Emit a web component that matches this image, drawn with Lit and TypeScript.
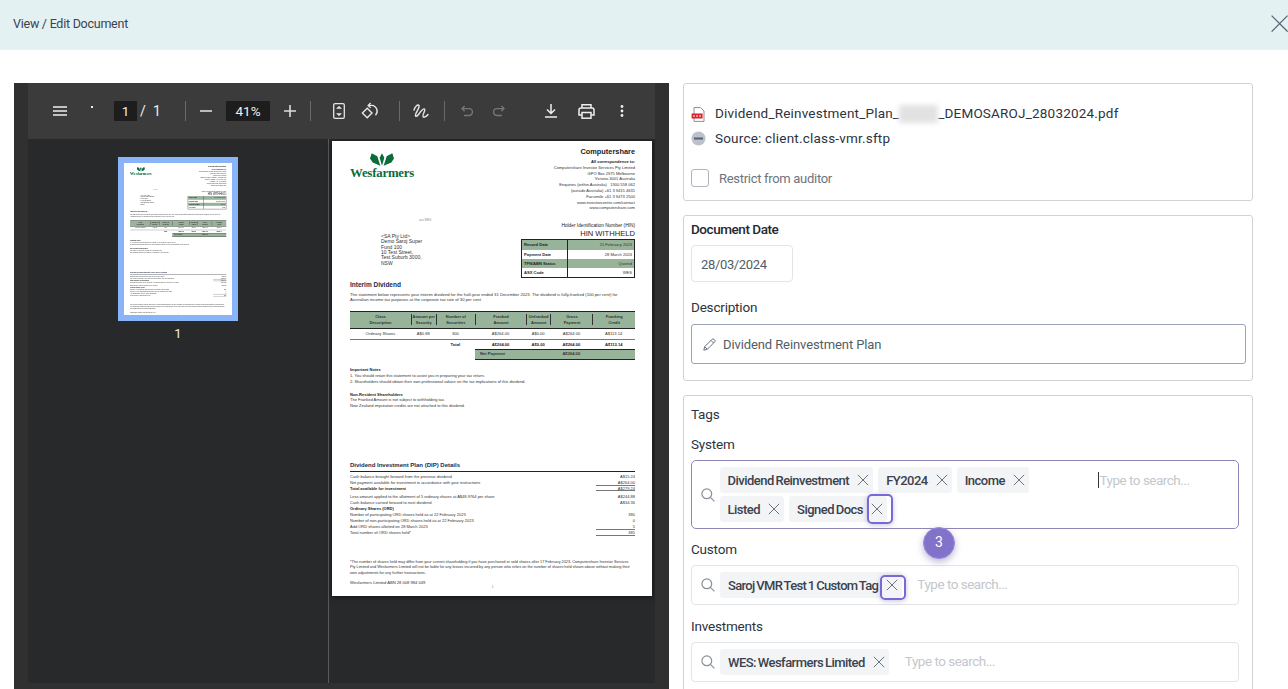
import { LitElement, css, html } from 'lit';
import { customElement, property } from 'lit/decorators.js';

const closeIcon = (size = 12) => html`<svg class="x" width=${size} height=${size} viewBox="0 0 12 12" fill="none" stroke="currentColor" stroke-width="1"><path d="M.8.8l10.4 10.4M11.2.8L.8 11.2" /></svg>`;

const searchIcon = html`<svg class="search" width="14" height="14" viewBox="0 0 14 14" fill="none" stroke="#8a909a" stroke-width="1.2"><circle cx="5.8" cy="5.8" r="4.9" /><path d="M9.4 9.4l4 4" /></svg>`;

@customElement('pdf-page')
export class PdfPage extends LitElement {
  static styles = css`
    :host { display: block; width: 320px; height: 455px; background: #fff; box-sizing: border-box; padding: 0 17px 0 18px; font-family: 'Liberation Sans', Arial, sans-serif; font-size: 4.1px; line-height: 5.8px; color: #333; overflow: hidden; }
    .head { display: flex; justify-content: space-between; }
    .logo { width: 66px; padding-top: 12px; color: #0b6b3d; }
    .logo svg { display: block; margin-left: 20px; }
    .logo div { font: bold 12.8px/13px 'Liberation Serif', serif; letter-spacing: -.2px; margin-top: 1px; }
    .contact { padding-top: 7px; text-align: right; font-size: 4.05px; }
    .cshare { font-weight: bold; font-size: 7.4px; line-height: 8px; color: #222; margin-bottom: 3px; }
    b { color: #222; }
    .ref { font-size: 3px; line-height: 4px; margin: 7px 0 0 69px; color: #888; }
    .mid { display: flex; justify-content: space-between; }
    .addr { padding: 12px 0 0 31px; font-size: 5px; line-height: 5.3px; }
    .right { width: 114px; text-align: right; margin-top: 1px; }
    .hin { font-size: 4.8px; line-height: 6px; color: #222; }
    .hin-big { font-size: 7.6px; line-height: 9px; color: #222; margin-bottom: 1.3px; }
    .facts { border: 1px solid #222; text-align: left; }
    .facts div { display: grid; grid-template-columns: 46px 1fr; height: 9.25px; line-height: 9.25px; }
    .facts div.g { background: #97b49a; }
    .facts span:first-child { font-weight: bold; padding-left: 2px; border-right: 1px solid #222; color: #222; }
    .facts span:last-child { text-align: right; padding-right: 2px; }
    h2 { margin: 2px 0 0; font-size: 6.5px; line-height: 9px; color: #1d2b4c; }
    .para { margin-top: 2.2px; line-height: 5.5px; font-size: 4.2px; white-space: nowrap; }
    .cols { display: grid; grid-template-columns: 61px 24.5px 39.7px 50.7px 24.6px 42px 1fr; text-align: center; white-space: nowrap; }
    .thead { margin-top: 8.7px; border-top: 1.7px solid #222; border-bottom: 1px solid #222; background: #97b49a; height: 15.3px; font-weight: bold; font-size: 4px; color: #333; line-height: 6px; align-items: center; }
    .thead span + span { border-left: 1px solid #333; height: 11px; }
    .tbody { height: 10px; line-height: 10px; border-bottom: 1.5px solid #777; }
    .ttotal { height: 9.5px; line-height: 9.5px; font-weight: bold; color: #222; }
    .tnet { margin-left: 125px; border-top: 1.5px solid #222; border-bottom: 1px solid #222; background: #97b49a; height: 8.5px; line-height: 8.5px; display: grid; grid-template-columns: 75.3px 42px; font-weight: bold; color: #333; }
    .tnet span:first-child { padding-left: 5px; }
    .tnet span:last-child { text-align: center; }
    .notes { margin-top: 7.5px; font-size: 4px; }
    .notes.second { margin-top: 7px; }
    .dip { margin-top: 52.5px; font-size: 4px; }
    .dip h2 { margin: 0; border-bottom: 1.7px solid #222; height: 10px; font-size: 6px; }
    .rows { margin-top: 1.3px; }
    .rows.gap { margin-top: 2.4px; }
    .rows.tight { margin-top: .6px; }
    .rows div { display: flex; justify-content: space-between; height: 5.9px; }
    .rows span:last-child { width: 39px; text-align: right; box-sizing: border-box; }
    .rows .u span:last-child { border-bottom: 1.3px solid #777; }
    .foot { margin-top: 24px; line-height: 5.5px; font-size: 3.8px; white-space: nowrap; }
    .abn { margin-top: 3.8px; line-height: 5px; }
    .num { text-align: center; font-size: 3px; line-height: 4px; color: #77a; }
  `;

  render() {
    return html`
      <div class="head">
        <div class="logo">
          <svg width="24" height="13" viewBox="0 0 72 38" fill="#0b6b3d">
            <path d="M5 0L22 9 31 38 8 28 0 16Z" />
            <path d="M36 0L29 14 36 38 43 14Z" />
            <path d="M67 0L50 9 41 38 64 28 72 16Z" />
          </svg>
          <div>Wesfarmers</div>
        </div>
        <div class="contact">
          <div class="cshare">Computershare</div>
          <b>All correspondence to:</b><br />
          Computershare Investor Services Pty Limited<br />
          GPO Box 2975 Melbourne<br />
          Victoria 3001 Australia<br />
          Enquiries (within Australia) &nbsp; 1300 558 062<br />
          (outside Australia) +61 3 9415 4631<br />
          Facsimile +61 3 9473 2500<br />
          www.investorcentre.com/contact<br />
          www.computershare.com
        </div>
      </div>
      <div class="ref">ass WES</div>
      <div class="mid">
        <div class="addr">&lt;SA Pty Ltd&gt;<br />Demo Saroj Super<br />Fund 100<br />10 Test Street,<br />Test Suburb 3000,<br />NSW</div>
        <div class="right">
          <div class="hin">Holder Identification Number (HIN)</div>
          <div class="hin-big">HIN WITHHELD</div>
          <div class="facts">
            <div class="g"><span>Record Date</span><span>21 February 2024</span></div>
            <div><span>Payment Date</span><span>28 March 2024</span></div>
            <div class="g"><span>TFN/ABN Status</span><span>Quoted</span></div>
            <div><span>ASX Code</span><span>WES</span></div>
          </div>
        </div>
      </div>
      <h2>Interim Dividend</h2>
      <div class="para">The statement below represents your interim dividend for the half-year ended 31 December 2023. The dividend is fully-franked (100 per cent) for<br />Australian income tax purposes at the corporate tax rate of 30 per cent.</div>
      <div class="cols thead">
        <span>Class<br />Description</span><span>Amount per<br />Security</span><span>Number of<br />Securities</span><span>Franked<br />Amount</span><span>Unfranked<br />Amount</span><span>Gross<br />Payment</span><span>Franking<br />Credit</span>
      </div>
      <div class="cols tbody">
        <span>Ordinary Shares</span><span>A$0.88</span><span>300</span><span>A$264.00</span><span>A$0.00</span><span>A$264.00</span><span>A$113.14</span>
      </div>
      <div class="cols ttotal">
        <span></span><span></span><span>Total</span><span>A$264.00</span><span>A$0.00</span><span>A$264.00</span><span>A$113.14</span>
      </div>
      <div class="tnet"><span>Net Payment</span><span>A$264.00</span></div>
      <div class="notes">
        <b>Important Notes</b><br />
        1. You should retain this statement to assist you in preparing your tax return.<br />
        2. Shareholders should obtain their own professional advice on the tax implications of this dividend.
      </div>
      <div class="notes second">
        <b>Non-Resident Shareholders</b><br />
        The Franked Amount is not subject to withholding tax.<br />
        New Zealand imputation credits are not attached to this dividend.
      </div>
      <div class="dip">
        <h2>Dividend Investment Plan (DIP) Details</h2>
        <div class="rows">
          <div><span>Cash balance brought forward from the previous dividend</span><span>A$15.24</span></div>
          <div class="u"><span>Net payment available for investment in accordance with your instructions</span><span>A$264.00</span></div>
          <div class="u"><span><b>Total available for investment</b></span><span>A$279.24</span></div>
        </div>
        <div class="rows gap">
          <div><span>Less amount applied to the allotment of 5 ordinary shares at A$48.9764 per share</span><span>A$244.88</span></div>
          <div><span>Cash balance carried forward to next dividend</span><span>A$34.36</span></div>
        </div>
        <div class="rows tight">
          <div><span><b>Ordinary Shares (ORD)</b></span><span></span></div>
          <div><span>Number of participating ORD shares held as at 22 February 2023</span><span>380</span></div>
          <div><span>Number of non-participating ORD shares held as at 22 February 2023</span><span>0</span></div>
          <div class="u"><span>Add ORD shares allotted on 28 March 2023</span><span>5</span></div>
          <div class="u"><span>Total number of ORD shares held*</span><span>385</span></div>
        </div>
      </div>
      <div class="foot">*The number of shares held may differ from your current shareholding if you have purchased or sold shares after 17 February 2023. Computershare Investor Services<br />Pty Limited and Wesfarmers Limited will not be liable for any losses incurred by any person who relies on the number of shares held shown above without making their<br />own adjustments for any further transactions.</div>
      <div class="abn">Wesfarmers Limited ABN 28 008 984 049</div>
      <div class="num">1</div>
    `;
  }
}

@customElement('pdf-viewer')
export class PdfViewer extends LitElement {
  static styles = css`
    :host { display: grid; grid-template-columns: 14px 627px 14px; grid-template-rows: 56px 544px 6px; width: 655px; height: 606px; background: #303030; font-family: Roboto, sans-serif; color: #eee; flex: none; overflow: hidden; }
    .bar { grid-column: 2; background: #3b3b3b; display: flex; align-items: center; padding-left: 25px; height: 56px; }
    .bar > * { flex: none; display: block; }
    .rail { grid-column: 1; grid-row: 1 / 4; }
    .body { grid-column: 2; grid-row: 2; display: flex; background: #28292b; height: 544px; overflow: hidden; }
    .side { width: 300px; border-right: 1px solid #5a5a5a; display: flex; flex-direction: column; align-items: center; padding-top: 18px; flex: none; }
    .thumb { border: 6px solid #8ab4f8; width: 108px; height: 152px; overflow: hidden; }
    .thumb pdf-page { transform: scale(.3375); transform-origin: 0 0; }
    .side span { font-size: 13px; margin-top: 6px; line-height: 14px; }
    .view { flex: 1; padding: 2px 0 0 3px; }
    .view pdf-page { box-shadow: 0 1px 5px rgba(0, 0, 0, .6); }
    .field { background: #1d1d1d; height: 20px; line-height: 20px; text-align: center; font-size: 13.5px; }
    .txt { font-size: 14px; text-align: center; line-height: 20px; }
    .sep { width: 1px; height: 20px; background: #6a6a6a; }
    .m-dot { margin-left: 24px; width: 2px; height: 2px; background: #eee; transform: translateY(-4px); }
    .m-page { margin-left: 21px; width: 23px; }
    .m-slash { margin-left: 2px; width: 8px; }
    .m-total { margin-left: 6px; width: 8px; }
    .m-s1 { margin-left: 24px; }
    .m-minus { margin-left: 14px; }
    .m-zoom { margin-left: 14px; width: 44px; }
    .m-plus { margin-left: 14px; }
    .m-s2 { margin-left: 14px; }
    .m-fit { margin-left: 22px; }
    .m-rot { margin-left: 16px; }
    .m-s3 { margin-left: 20px; }
    .m-draw { margin-left: 13px; }
    .m-s4 { margin-left: 15px; }
    .m-undo { margin-left: 16px; }
    .m-redo { margin-left: 20px; }
    .m-down { margin-left: 40px; }
    .m-print { margin-left: 21px; }
    .m-more { margin-left: 25px; }
  `;

  render() {
    return html`
      <div class="rail"></div>
      <div class="bar">
        <svg width="14" height="10" viewBox="0 0 14 10" stroke="#eee" stroke-width="1.6"><path d="M0 1h14M0 5h14M0 9h14" /></svg>
        <div class="m-dot"></div>
        <div class="field m-page">1</div>
        <div class="txt m-slash">/</div>
        <div class="txt m-total">1</div>
        <div class="sep m-s1"></div>
        <svg class="m-minus" width="12" height="12" viewBox="0 0 12 12" stroke="#ddd" stroke-width="1.6"><path d="M0 6h12" /></svg>
        <div class="field m-zoom">41%</div>
        <svg class="m-plus" width="12" height="12" viewBox="0 0 12 12" stroke="#ddd" stroke-width="1.6"><path d="M0 6h12M6 0v12" /></svg>
        <div class="sep m-s2"></div>
        <svg class="m-fit" width="12" height="16" viewBox="0 0 12 16" fill="none" stroke="#e6e6e6" stroke-width="1.3"><rect x=".7" y=".7" width="10.6" height="14.6" rx="1.4" /><path d="M3.6 5.4L6 3.2l2.4 2.2z M3.6 10.6L6 12.8l2.4-2.2z" fill="#e6e6e6" stroke-width=".6" /></svg>
        <svg class="m-rot" width="18" height="18" viewBox="0 0 18 18" fill="none" stroke="#e6e6e6" stroke-width="1.4"><path d="M6.2 6.2L1.4 11l4.8 4.8L11 11z" /><path d="M7.5 3.4h3.2a5.8 5.8 0 0 1 3.8 9.8" /><path d="M9.6 1L7.2 3.4l2.4 2.4" /></svg>
        <div class="sep m-s3"></div>
        <svg class="m-draw" width="16" height="16" viewBox="0 0 16 16" fill="none" stroke="#e6e6e6" stroke-width="1.4" stroke-linecap="round"><path d="M1 7C2 3 5 1 6 2.5 7 4.500 3 9 2.500 12c-.3 2 1.500 1.500 3-.5S10 5 11.500 6 9 12 10 13.500 14 13 15 11.500" /></svg>
        <div class="sep m-s4"></div>
        <svg class="m-undo" width="12" height="12" viewBox="0 0 12 12" fill="none" stroke="#777" stroke-width="1.3"><path d="M3.600 1L1 3.600l2.600 2.600M1 3.600h7a3.300 3.300 0 0 1 0 6.900H3" /></svg>
        <svg class="m-redo" width="12" height="12" viewBox="0 0 12 12" fill="none" stroke="#777" stroke-width="1.3"><path d="M8.400 1L11 3.600 8.400 6.200M11 3.600H4a3.300 3.300 0 0 0 0 6.900h5" /></svg>
        <svg class="m-down" width="12" height="14" viewBox="0 0 12 14" fill="none" stroke="#eee" stroke-width="1.5"><path d="M6 0v9M2 5.500L6 9.500l4-4M0 13h12" /></svg>
        <svg class="m-print" width="17" height="15" viewBox="0 0 17 15" fill="none" stroke="#eee" stroke-width="1.5"><path d="M4 4V.8h9V4M4 11H1V6q0-2 2-2h11q2 0 2 2v5h-3" /><rect x="4" y="8.500" width="9" height="5.700" /></svg>
        <svg class="m-more" width="4" height="12" viewBox="0 0 4 12" fill="#eee"><circle cx="2" cy="1.500" r="1.400" /><circle cx="2" cy="6" r="1.400" /><circle cx="2" cy="10.500" r="1.400" /></svg>
      </div>
      <div class="body">
        <div class="side">
          <div class="thumb"><pdf-page></pdf-page></div>
          <span>1</span>
        </div>
        <div class="view"><pdf-page></pdf-page></div>
      </div>
    `;
  }
}

@customElement('tag-chip')
export class TagChip extends LitElement {
  @property() label = '';
  @property() ring = '';
  @property({ type: Boolean, reflect: true }) tight = false;

  static styles = css`
    :host { display: inline-flex; align-items: center; height: 26px; background: #f3f4f6; border-radius: 3px; padding: 0 4px 0 8px; gap: 8px; font-size: 13px; font-weight: 500; letter-spacing: -.52px; word-spacing: -1px; color: #3a424e; white-space: nowrap; flex: none; }
    :host([tight]) { letter-spacing: -.65px; }
    .close { position: relative; display: flex; color: #6b7280; }
    .ring { position: absolute; width: 26px; box-sizing: border-box; border: 2px solid #7a68d6; border-radius: 5px; box-shadow: 0 1px 5px rgba(90, 80, 160, .35); }
    .ring.tall { left: -4px; top: -9.5px; height: 30px; }
    .ring.short { left: -6px; top: -4.5px; height: 25px; }
  `;

  render() {
    return html`${this.label}<span class="close">${closeIcon()}${this.ring ? html`<span class="ring ${this.ring}"></span>` : ''}</span>`;
  }
}

@customElement('app-root')
export class AppRoot extends LitElement {
  static styles = css`
    :host { display: block; width: 1288px; height: 689px; overflow: hidden; background: #fff; font-family: Roboto, sans-serif; font-size: 14px; color: #2d3340; }
    .top { height: 50px; border-bottom: 1px solid #eaf3f4; background: #e3f1f2; display: flex; align-items: center; justify-content: space-between; padding: 0 0 2px 13px; font-size: 12.5px; letter-spacing: -.25px; color: #3a4350; box-sizing: border-box; }
    .top svg { color: #5a6475; flex: none; }
    .main { display: flex; gap: 14px; padding: 33px 0 0 14px; }
    .form { width: 570px; display: flex; flex-direction: column; gap: 14px; flex: none; }
    .card { border: 1px solid #cfd2d6; border-radius: 3px; padding: 0 7px; box-sizing: border-box; }
    .file { height: 118px; padding-top: 20px; }
    .line { display: flex; align-items: center; gap: 9px; height: 20px; margin-bottom: 4px; color: #2d3340; font-size: 13.5px; letter-spacing: .2px; }
    .line svg { flex: none; }
    .blur { display: inline-block; width: 39px; height: 18px; background: #e2e2e2; filter: blur(2.5px); vertical-align: middle; }
    .check { display: flex; align-items: center; gap: 10px; margin-top: 21px; color: #6d7480; font-size: 13px; letter-spacing: -.3px; }
    .box { width: 18px; height: 18px; border: 1px solid #b0b5bd; border-radius: 3px; box-sizing: border-box; }
    .meta { height: 166px; padding-top: 4px; }
    label { display: block; line-height: 18px; font-size: 13.5px; letter-spacing: -.2px; }
    label.strong { font-weight: 500; color: #232833; letter-spacing: -.45px; }
    .date { width: 102px; height: 37px; margin: 7px 0 16px; border: 1px solid #e2e4e8; border-radius: 4px; box-sizing: border-box; padding-left: 9px; line-height: 37px; font-size: 13px; letter-spacing: -.35px; color: #555c66; }
    .desc { width: 555px; height: 40px; margin-top: 8px; border: 1px solid #9aa3b5; border-radius: 3px; box-sizing: border-box; display: flex; align-items: center; gap: 7px; padding-left: 11px; font-size: 13px; letter-spacing: -.1px; color: #555c66; }
    .tags { height: 320px; padding-top: 9px; }
    .tags > label { margin-bottom: 12px; }
    .tags > label.fl { margin-bottom: 7px; }
    .group { width: 548px; display: flex; align-items: center; box-sizing: border-box; border: 1px solid #e2e4e8; border-radius: 4px; height: 40px; margin-bottom: 12px; padding-left: 9px; position: relative; }
    .group .search { flex: none; margin-right: 5px; }
    .group.active { height: 69px; border: 1.5px solid #8f86b8; border-radius: 5px; margin-bottom: 11px; padding-left: 8.5px; }
    .chips { display: flex; flex-wrap: wrap; gap: 3px 5px; width: 370px; flex: none; }
    .ph { color: #c4c7cd; font-size: 13.5px; letter-spacing: -.5px; line-height: 18px; margin: 0 0 2px 15px; }
    .ph.inv { margin-left: 16px; }
    .active .ph { margin: 0 0 29px 10px; position: relative; }
    .active .ph::before { content: ''; position: absolute; left: -2px; top: 1px; width: 1px; height: 16px; background: #333; }
    .badge { position: absolute; left: 231px; top: 66px; width: 32px; height: 32px; border-radius: 50%; box-sizing: border-box; border: 1.5px solid #9b8fdc; background: #8272c9; color: #fff; font-size: 14px; line-height: 29px; text-align: center; box-shadow: 0 3px 7px rgba(70, 60, 130, .35); z-index: 2; }
  `;

  render() {
    return html`
      <div class="top">
        <span>View / Edit Document</span>
        <svg width="17" height="17" viewBox="0 0 17 17" fill="none" stroke="currentColor" stroke-width="1.3"><path d="M.6.6l16 16M16.6.6l-16 16" /></svg>
      </div>
      <div class="main">
        <pdf-viewer></pdf-viewer>
        <div class="form">
          <div class="card file">
            <div class="line">
              <svg width="15" height="15" viewBox="0 0 15 15"><path d="M3 .6h6.5L13 4v10.4H3z" fill="#fff" stroke="#8b8f96" /><rect x=".6" y="6.5" width="11" height="5" fill="#d8232a" /><path d="M2 9h8" stroke="#fff" stroke-width="1" stroke-dasharray="2 1" /></svg>
              <span>Dividend_Reinvestment_Plan_<span class="blur"></span>_DEMOSAROJ_28032024.pdf</span>
            </div>
            <div class="line">
              <svg width="15" height="15" viewBox="0 0 15 15"><circle cx="7.5" cy="7.5" r="7" fill="#bcc2cb" /><rect x="3" y="6.5" width="9" height="2" fill="#56606c" /></svg>
              <span>Source: client.class-vmr.sftp</span>
            </div>
            <div class="check"><div class="box"></div>Restrict from auditor</div>
          </div>
          <div class="card meta">
            <label class="strong">Document Date</label>
            <div class="date">28/03/2024</div>
            <label>Description</label>
            <div class="desc">
              <svg width="13" height="13" viewBox="0 0 13 13" fill="none" stroke="#6b7280"><path d="M.8 12.2l.9-3.5L9.2 1.200q.8-.8 1.700 0l.9.900q.8.900 0 1.700L4.300 11.300zM1.700 8.700l2.600 2.600M8 2.400l2.600 2.600" /></svg>
              Dividend Reinvestment Plan
            </div>
          </div>
          <div class="card tags">
            <label>Tags</label>
            <label class="fl">System</label>
            <div class="group active">
              ${searchIcon}
              <div class="chips">
                <tag-chip label="Dividend Reinvestment"></tag-chip>
                <tag-chip label="FY2024"></tag-chip>
                <tag-chip label="Income"></tag-chip>
                <tag-chip label="Listed"></tag-chip>
                <tag-chip label="Signed Docs" ring="tall"></tag-chip>
              </div>
              <span class="ph">Type to search...</span>
              <div class="badge">3</div>
            </div>
            <label class="fl">Custom</label>
            <div class="group">
              ${searchIcon}
              <tag-chip label="Saroj VMR Test 1 Custom Tag" ring="short" tight></tag-chip>
              <span class="ph">Type to search...</span>
            </div>
            <label class="fl">Investments</label>
            <div class="group">
              ${searchIcon}
              <tag-chip label="WES: Wesfarmers Limited"></tag-chip>
              <span class="ph inv">Type to search...</span>
            </div>
          </div>
        </div>
      </div>
    `;
  }
}
